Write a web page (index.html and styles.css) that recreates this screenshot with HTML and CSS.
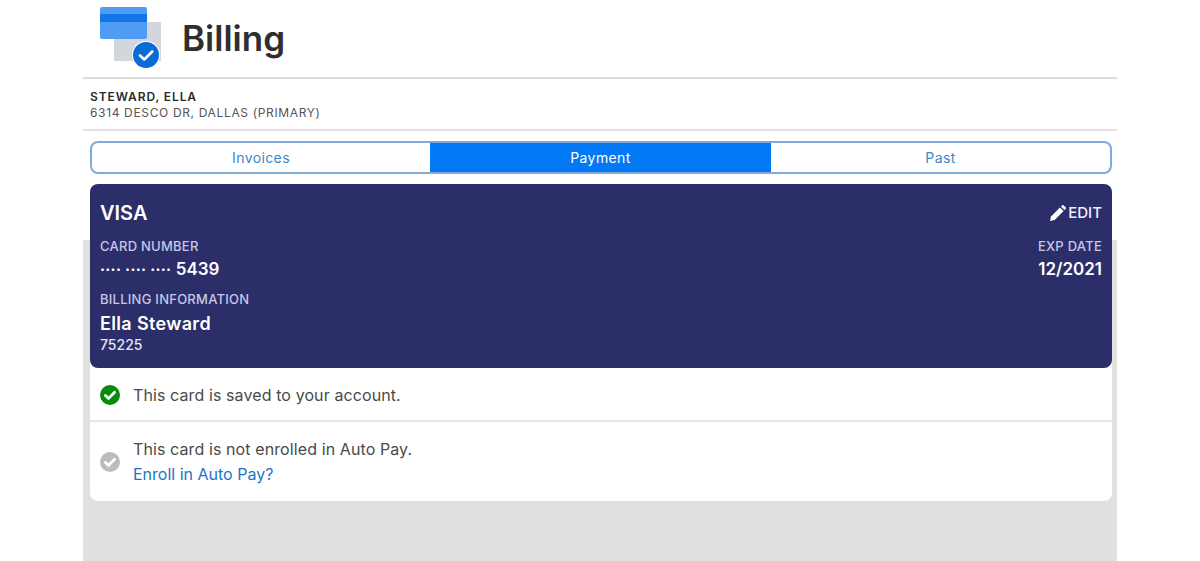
FILE: index.html
```html
<!DOCTYPE html>
<html lang="en">
<head>
<meta charset="utf-8">
<title>Billing</title>
<link rel="stylesheet" href="styles.css">
</head>
<body>
<div class="app">
  <header class="title-bar">
    <svg class="billing-icon" width="62" height="62" viewBox="0 0 62 62" aria-hidden="true">
      <rect x="14" y="15" width="47" height="39" fill="#d3d6da"/>
      <rect x="0" y="0" width="47" height="32" rx="2" fill="#4f9cf5"/>
      <rect x="0" y="7" width="47" height="8" fill="#1476e6"/>
      <circle cx="46" cy="48" r="14" fill="#fff"/>
      <circle cx="46" cy="48" r="13" fill="#0a6ad8"/>
      <path d="M40 48.5l4.3 4 8-8" fill="none" stroke="#fff" stroke-width="2.6" stroke-linecap="round" stroke-linejoin="round"/>
    </svg>
    <h1 class="page-title">Billing</h1>
  </header>
  <section class="account">
    <div class="account-name">STEWARD, ELLA</div>
    <div class="account-address">6314 DESCO DR, DALLAS (PRIMARY)</div>
  </section>
  <main class="content">
    <nav class="tabs">
      <a class="tab">Invoices</a>
      <a class="tab tab-active">Payment</a>
      <a class="tab">Past</a>
    </nav>
    <article class="card">
      <div class="card-row card-top">
        <div class="card-brand">VISA</div>
        <div class="card-edit">
          <svg width="17" height="17" viewBox="0 0 17 17" aria-hidden="true">
            <path d="M1 16l1-4.6L11 2.4l3.6 3.6-9 9z" fill="#fff"/>
            <path d="M12 1.4l1-1a1.2 1.2 0 0 1 1.7 0l1.9 1.9a1.2 1.2 0 0 1 0 1.7l-1 1z" fill="#fff"/>
          </svg>
          <span>EDIT</span>
        </div>
      </div>
      <div class="card-row card-numbers">
        <div>
          <div class="card-label">CARD NUMBER</div>
          <div class="card-value"><span class="card-dots">···· ···· ····</span> 5439</div>
        </div>
        <div class="card-exp">
          <div class="card-label">EXP DATE</div>
          <div class="card-value">12/2021</div>
        </div>
      </div>
      <div class="card-label card-billing-label">BILLING INFORMATION</div>
      <div class="card-holder">Ella Steward</div>
      <div class="card-zip">75225</div>
    </article>
    <section class="status-list">
      <div class="status status-saved">
        <svg class="status-icon" width="20" height="20" viewBox="0 0 20 20" aria-hidden="true">
          <circle cx="10" cy="10" r="10" fill="#0a8a0a"/>
          <path d="M5.4 10.4l3.2 3 6-6.2" fill="none" stroke="#fff" stroke-width="2.8" stroke-linecap="round" stroke-linejoin="round"/>
        </svg>
        <div class="status-text">This card is saved to your account.</div>
      </div>
      <div class="status status-autopay">
        <svg class="status-icon" width="20" height="20" viewBox="0 0 20 20" aria-hidden="true">
          <circle cx="10" cy="10" r="10" fill="#bcbcbc"/>
          <path d="M5.4 10.4l3.2 3 6-6.2" fill="none" stroke="#fff" stroke-width="2.8" stroke-linecap="round" stroke-linejoin="round"/>
        </svg>
        <div class="status-text">
          <div>This card is not enrolled in Auto Pay.</div>
          <a class="status-link">Enroll in Auto Pay?</a>
        </div>
      </div>
    </section>
  </main>
</div>
</body>
</html>
```
FILE: styles.css
```css
* { box-sizing: border-box; }
html, body { margin: 0; height: 561px; overflow: hidden; background: #fff; }
body { font-family: Inter, "Liberation Sans", sans-serif; color: #444; }
.app { width: 1034px; height: 561px; margin-left: 83px; display: flex; flex-direction: column; }
.title-bar { height: 79px; padding: 7px 0 0 17px; display: flex; align-items: flex-start; gap: 20px; border-bottom: 2px solid #dcdcdc; }
.billing-icon { display: block; flex: none; }
.page-title { margin: 7px 0 0; font-size: 35px; line-height: 48px; font-weight: 600; color: #2e2e2e; }
.account { height: 52px; padding: 10px 0 0 7px; border-bottom: 2px solid #e2e2e2; font-size: 12px; line-height: 16px; }
.account-name { font-weight: 600; color: #2a2a2a; letter-spacing: 0.9px; }
.account-address { color: #555; letter-spacing: 0.65px; }
.content { flex: 1; padding: 10px 5px 0 7px; background: linear-gradient(#fff 0 109px, #e0e0e0 109px); }
.tabs { height: 33px; display: grid; grid-template-columns: 338px 341px 339px; border: 2px solid #7fabd8; border-radius: 8px; overflow: hidden; background: #fff; }
.tab { display: flex; align-items: center; justify-content: center; font-size: 14px; letter-spacing: 0.4px; color: #3e86c8; }
.tab-active { background: #0479f5; color: #fff; margin: -2px 0; }
.card { height: 184px; margin-top: 10px; padding: 17px 10px 0; background: #2c2e69; border-radius: 8px; color: #fff; position: relative; z-index: 1; }
.card-row { display: flex; justify-content: space-between; }
.card-brand { font-size: 20px; line-height: 24px; font-weight: 600; }
.card-edit { display: flex; align-items: center; gap: 2px; font-size: 15px; line-height: 24px; font-weight: 500; color: #eef; }
.card-numbers { margin-top: 13px; }
.card-label { font-size: 13px; line-height: 16px; font-weight: 500; letter-spacing: 0.25px; color: #c6c8e6; }
.card-value { margin-top: 5px; font-size: 17px; line-height: 20px; font-weight: 600; }
.card-dots { font-weight: 700; font-size: 15px; letter-spacing: 0.3px; }
.card-exp { text-align: right; }
.card-billing-label { margin-top: 11px; }
.card-holder { margin-top: 5px; font-size: 18px; line-height: 24px; font-weight: 600; letter-spacing: 0.35px; }
.card-zip { margin-top: 0; font-size: 14px; line-height: 17px; font-weight: 500; color: #e6e6f4; }
.status-list { background: #fff; border-radius: 0 0 8px 8px; margin-top: -8px; padding-top: 8px; }
.status { display: flex; align-items: center; gap: 13px; padding-left: 10px; font-size: 16px; letter-spacing: 0.1px; color: #4a4a4a; }
.status-icon { flex: none; display: block; }
.status-saved { height: 54px; padding-top: 2px; border-bottom: 2px solid #e6e6e6; }
.status-autopay { height: 79px; }
.status-autopay .status-text { line-height: 25px; margin-top: 1px; }
.status-link { color: #1c75c4; letter-spacing: 0; }
```
